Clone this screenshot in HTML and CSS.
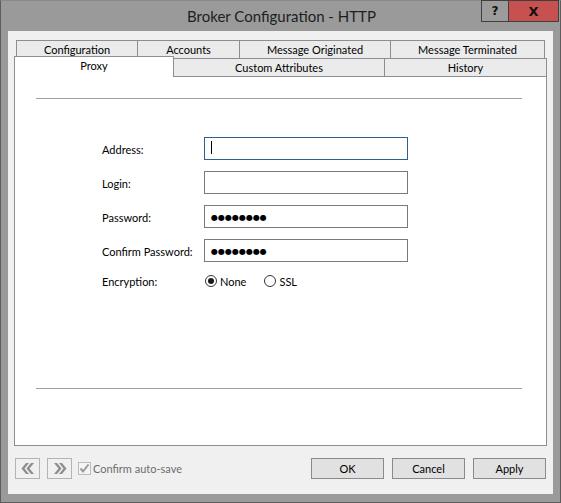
FILE: index.html
```html
<!DOCTYPE html>
<html>
<head>
<meta charset="utf-8">
<link rel="stylesheet" href="styles.css">
</head>
<body>
<div class="window">
  <div class="titlebar">
    <span class="title">Broker Configuration - HTTP</span>
    <div class="caption">
      <div class="cap help">?</div>
      <div class="cap close">X</div>
    </div>
  </div>
  <div class="client">
    <div class="tabctl">
      <div class="tabrow row1">
        <div class="tab t-config">Configuration</div>
        <div class="tab t-accounts">Accounts</div>
        <div class="tab t-orig">Message Originated</div>
        <div class="tab t-term">Message Terminated</div>
      </div>
      <div class="tabrow row2">
        <div class="tab sel t-proxy">Proxy</div>
        <div class="tab t-custom">Custom Attributes</div>
        <div class="tab t-history">History</div>
      </div>
      <div class="panel">
        <div class="sep sep-top"></div>
        <div class="form">
          <div class="label">Address:</div>
          <div class="field focus"><span class="caret"></span></div>
          <div class="label">Login:</div>
          <div class="field"></div>
          <div class="label">Password:</div>
          <div class="field"><span class="dots">●●●●●●●●</span></div>
          <div class="label">Confirm Password:</div>
          <div class="field"><span class="dots">●●●●●●●●</span></div>
          <div class="label label-enc">Encryption:</div>
          <div class="radios">
            <span class="radio checked"></span><span class="rlabel r-none">None</span>
            <span class="radio"></span><span class="rlabel">SSL</span>
          </div>
        </div>
        <div class="sep sep-bottom"></div>
      </div>
    </div>
    <div class="footer">
      <div class="nav">
        <svg width="14" height="11" viewBox="0 0 14 11"><polygon points="5,0 8,0 3.5,5.5 8,11 5,11 0.5,5.5" fill="#8e8e8e"/><polygon points="10,0 13,0 8.5,5.5 13,11 10,11 5.5,5.5" fill="#8e8e8e"/></svg>
      </div>
      <div class="nav nav2">
        <svg width="14" height="11" viewBox="0 0 14 11"><polygon points="1,0 4,0 8.5,5.5 4,11 1,11 5.5,5.5" fill="#8e8e8e"/><polygon points="6,0 9,0 13.5,5.5 9,11 6,11 10.5,5.5" fill="#8e8e8e"/></svg>
      </div>
      <div class="check">
        <svg width="11" height="11" viewBox="0 0 11 11"><polyline points="1.5,5.5 4,8.5 9.5,1.5" fill="none" stroke="#9a9a9a" stroke-width="2"/></svg>
      </div>
      <span class="check-label">Confirm auto-save</span>
      <div class="spacer"></div>
      <div class="btn">OK</div>
      <div class="btn">Cancel</div>
      <div class="btn">Apply</div>
    </div>
  </div>
</div>
</body>
</html>
```
FILE: styles.css
```css
html, body {
  margin: 0;
  padding: 0;
  background: #9a9a9a;
}
body {
  font-family: Lato, "Noto Sans", sans-serif;
  font-size: 11px;
  color: #000;
}
.window {
  position: relative;
  width: 561px;
  height: 503px;
  box-sizing: border-box;
  background: #9a9a9a;
  border: 1px solid #5c5c5c;
  border-top-color: #8a8a8a;
  padding: 0 7px 8px 7px;
  display: flex;
  flex-direction: column;
}
.titlebar {
  height: 30px;
  display: flex;
  align-items: center;
  justify-content: center;
}
.title {
  font-size: 15px;
  color: #1e1e1e;
  margin-left: 2px;
}
.caption {
  position: absolute;
  top: -1px;
  right: 1px;
  display: flex;
}
.cap {
  box-sizing: border-box;
  height: 22px;
  border: 1px solid #3f3f3f;
  display: flex;
  align-items: center;
  justify-content: center;
  font-family: "DejaVu Sans", sans-serif;
  font-weight: bold;
  font-size: 12px;
  color: #111;
}
.help {
  width: 28px;
  background: #9c9c9c;
}
.close {
  width: 51px;
  margin-left: -1px;
  background: #c75050;
  font-size: 13px;
}
.client {
  flex: 1;
  background: #f0f0f0;
  padding: 9px 6px 0 6px;
  display: flex;
  flex-direction: column;
}
.tabctl {
  display: flex;
  flex-direction: column;
}
.tabrow {
  display: flex;
  height: 18px;
}
.row1 {
  margin: 0 2px;
}
.row2 {
  align-items: flex-start;
}
.tab {
  box-sizing: border-box;
  height: 18px;
  border: 1px solid #8c8e94;
  border-bottom: none;
  background: #ebebeb;
  text-align: center;
  line-height: 18px;
  white-space: nowrap;
  margin-left: -1px;
}
.row1 .tab { line-height: 17px; }
.tab:first-child { margin-left: 0; }
.t-config { width: 122px; }
.t-accounts { width: 103px; }
.t-orig { width: 152px; }
.t-term { width: 155px; }
.t-proxy { width: 160px; }
.t-custom { width: 212px; }
.t-history { width: 163px; }
.tab.sel {
  position: relative;
  z-index: 2;
  height: 21px;
  margin-top: -2px;
  background: #fff;
  line-height: 18px;
}
.panel {
  box-sizing: border-box;
  width: 533px;
  height: 370px;
  border: 1px solid #8c8e94;
  background: #fff;
  display: flex;
  flex-direction: column;
}
.sep {
  width: 486px;
  height: 1px;
  background: #a0a0a0;
  margin-left: 21px;
}
.sep-top {
  margin-top: 21px;
}
.sep-bottom {
  margin-top: auto;
  margin-bottom: 56px;
}
.form {
  margin: 38px 0 0 87px;
  display: grid;
  grid-template-columns: 102px 204px;
  grid-template-rows: 23px 23px 23px 23px 16px;
  row-gap: 11px;
}
.label {
  align-self: center;
  padding-top: 2px;
}
.label.label-enc {
  padding-top: 0;
}
.field {
  box-sizing: border-box;
  height: 23px;
  border: 1px solid #7a7a7a;
  background: #fff;
  display: flex;
  align-items: center;
  padding-left: 6px;
}
.field.focus {
  border-color: #2f5f8f;
}
.caret {
  width: 1px;
  height: 13px;
  background: #000;
  margin-top: -2px;
}
.dots {
  font-family: "DejaVu Sans", sans-serif;
  font-size: 8px;
  margin-top: 1px;
}
.radios {
  display: flex;
  align-items: center;
  height: 16px;
  padding-left: 1px;
}
.radio {
  box-sizing: border-box;
  width: 12px;
  height: 12px;
  border: 1px solid #333;
  border-radius: 50%;
  background: #fff;
  display: flex;
  align-items: center;
  justify-content: center;
}
.radio.checked::after {
  content: "";
  width: 6px;
  height: 6px;
  border-radius: 50%;
  background: #1a1a1a;
}
.rlabel {
  margin-left: 3px;
}
.r-none {
  margin-right: 18px;
}
.footer {
  margin: 12px 1px 0 1px;
  height: 21px;
  display: flex;
  align-items: center;
}
.nav {
  box-sizing: border-box;
  width: 25px;
  height: 21px;
  border: 1px solid #b4b4b4;
  background: #f0f0f0;
  display: flex;
  align-items: center;
  justify-content: center;
}
.nav2 {
  margin-left: 7px;
}
.check {
  box-sizing: border-box;
  width: 13px;
  height: 13px;
  border: 1px solid #bcbcbc;
  background: #f4f4f4;
  margin-left: 6px;
  display: flex;
  align-items: center;
  justify-content: center;
}
.check-label {
  margin-left: 2px;
  color: #6d6d6d;
}
.spacer { flex: 1; }
.btn {
  box-sizing: border-box;
  width: 73px;
  height: 21px;
  border: 1px solid #8a8a8a;
  background: #e1e1e1;
  display: flex;
  align-items: center;
  justify-content: center;
  margin-left: 8px;
}
```
